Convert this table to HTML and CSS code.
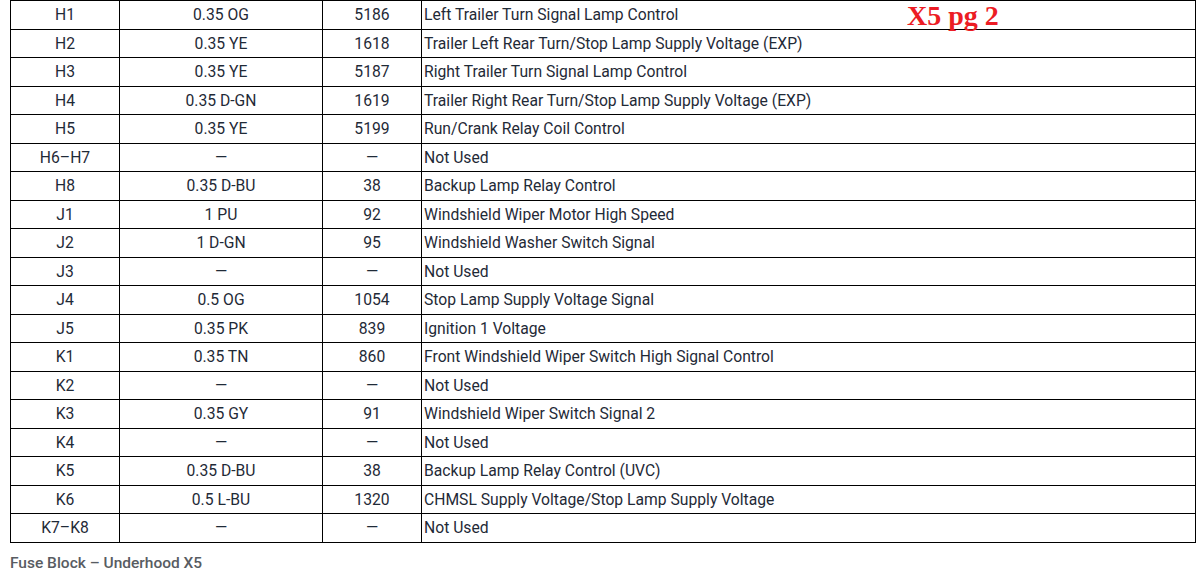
FILE: index.html
```html
<!DOCTYPE html>
<html>
<head>
<meta charset="utf-8">
<link rel="stylesheet" href="styles.css">
</head>
<body>
<div class="page">
  <table class="pins">
    <colgroup>
      <col class="c1"><col class="c2"><col class="c3"><col class="c4">
    </colgroup>
    <tbody>
      <tr><td>H1</td><td>0.35 OG</td><td>5186</td><td class="desc">Left Trailer Turn Signal Lamp Control</td></tr>
      <tr><td>H2</td><td>0.35 YE</td><td>1618</td><td class="desc">Trailer Left Rear Turn/Stop Lamp Supply Voltage (EXP)</td></tr>
      <tr><td>H3</td><td>0.35 YE</td><td>5187</td><td class="desc">Right Trailer Turn Signal Lamp Control</td></tr>
      <tr><td>H4</td><td>0.35 D-GN</td><td>1619</td><td class="desc">Trailer Right Rear Turn/Stop Lamp Supply Voltage (EXP)</td></tr>
      <tr><td>H5</td><td>0.35 YE</td><td>5199</td><td class="desc">Run/Crank Relay Coil Control</td></tr>
      <tr><td>H6–H7</td><td>—</td><td>—</td><td class="desc">Not Used</td></tr>
      <tr><td>H8</td><td>0.35 D-BU</td><td>38</td><td class="desc">Backup Lamp Relay Control</td></tr>
      <tr><td>J1</td><td>1 PU</td><td>92</td><td class="desc">Windshield Wiper Motor High Speed</td></tr>
      <tr><td>J2</td><td>1 D-GN</td><td>95</td><td class="desc">Windshield Washer Switch Signal</td></tr>
      <tr><td>J3</td><td>—</td><td>—</td><td class="desc">Not Used</td></tr>
      <tr><td>J4</td><td>0.5 OG</td><td>1054</td><td class="desc">Stop Lamp Supply Voltage Signal</td></tr>
      <tr><td>J5</td><td>0.35 PK</td><td>839</td><td class="desc">Ignition 1 Voltage</td></tr>
      <tr><td>K1</td><td>0.35 TN</td><td>860</td><td class="desc">Front Windshield Wiper Switch High Signal Control</td></tr>
      <tr><td>K2</td><td>—</td><td>—</td><td class="desc">Not Used</td></tr>
      <tr><td>K3</td><td>0.35 GY</td><td>91</td><td class="desc">Windshield Wiper Switch Signal 2</td></tr>
      <tr><td>K4</td><td>—</td><td>—</td><td class="desc">Not Used</td></tr>
      <tr><td>K5</td><td>0.35 D-BU</td><td>38</td><td class="desc">Backup Lamp Relay Control (UVC)</td></tr>
      <tr><td>K6</td><td>0.5 L-BU</td><td>1320</td><td class="desc">CHMSL Supply Voltage/Stop Lamp Supply Voltage</td></tr>
      <tr><td>K7–K8</td><td>—</td><td>—</td><td class="desc">Not Used</td></tr>
    </tbody>
  </table>
  <div class="caption">Fuse Block – Underhood X5</div>
  <div class="stamp">X5 pg 2</div>
</div>
</body>
</html>
```
FILE: styles.css
```css
html, body {
  margin: 0;
  padding: 0;
  background: #fff;
}
.page {
  position: relative;
  padding: 0 2px 0 10px;
  font-family: Roboto, "Liberation Sans", sans-serif;
  color: #1f2a37;
}
.pins {
  border-collapse: collapse;
  width: 1186px;
  table-layout: fixed;
  font-size: 15.7px;
}
.c1 { width: 109px; }
.c2 { width: 203px; }
.c3 { width: 99px; }
.pins td {
  border: 1px solid #000;
  height: 26.5px;
  padding: 1px 2px 0;
  text-align: center;
  vertical-align: middle;
  line-height: 16px;
  white-space: nowrap;
}
.pins td.desc {
  text-align: left;
}
.caption {
  margin-top: 11px;
  font-size: 15.5px;
  font-weight: 500;
  color: #585c62;
}
.stamp {
  position: absolute;
  left: 907px;
  top: 0;
  font-family: "Liberation Serif", serif;
  font-weight: bold;
  font-size: 28px;
  color: #ec1c24;
  line-height: 32px;
}
```
